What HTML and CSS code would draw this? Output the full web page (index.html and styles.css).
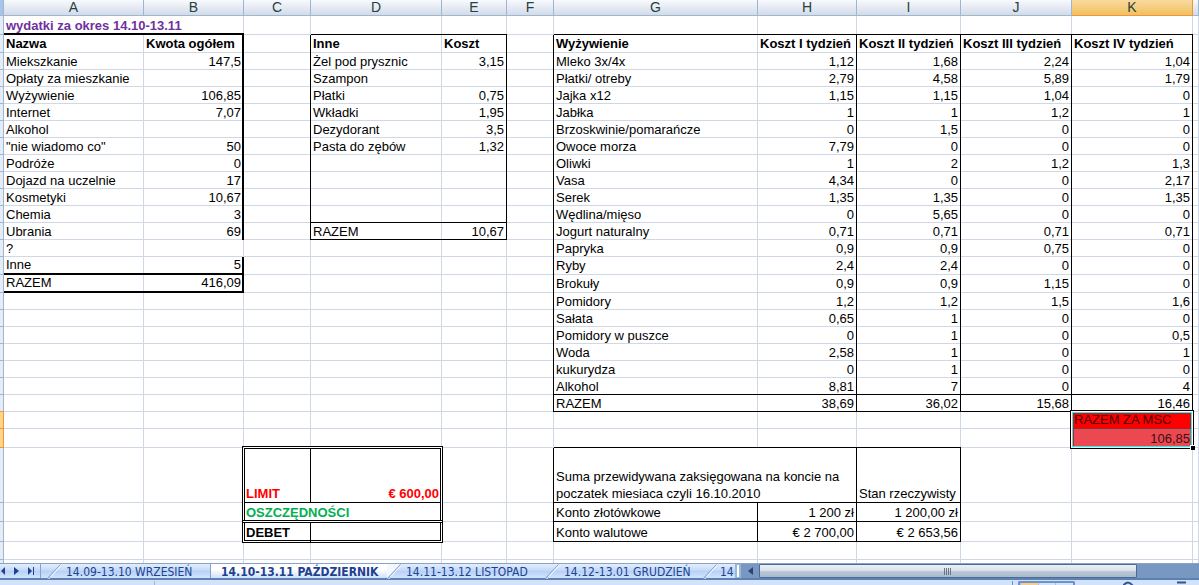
FILE: index.html
```html
<!DOCTYPE html>
<html lang="pl">
<head>
<meta charset="utf-8">
<title>Wydatki 14.10-13.11</title>
<link rel="stylesheet" href="styles.css">
</head>
<body>
<main class="sheet">
<table class="grid">
<colgroup><col class="c-head"><col class="c-a"><col class="c-b"><col class="c-c"><col class="c-d"><col class="c-e"><col class="c-f"><col class="c-g"><col class="c-h"><col class="c-i"><col class="c-j"><col class="c-k"><col></colgroup>
<thead>
<tr><th></th><th>A</th><th>B</th><th>C</th><th>D</th><th>E</th><th>F</th><th>G</th><th>H</th><th>I</th><th>J</th><th class="current">K</th><th></th></tr>
</thead>
<tbody>
<tr class="h19"><th></th><td colspan="2" class="title thick-b">wydatki za okres 14.10-13.11</td><td></td><td class="line-b"></td><td class="line-b"></td><td></td><td class="line-b"></td><td class="line-b"></td><td class="line-b"></td><td class="line-b"></td><td class="line-b"></td><td></td></tr>
<tr class="h18 exp inne food names"><th></th><td>Nazwa</td><td>Kwota ogółem</td><td></td><td>Inne</td><td>Koszt</td><td></td><td>Wyżywienie</td><td>Koszt I tydzień</td><td>Koszt II tydzień</td><td>Koszt III tydzień</td><td>Koszt IV tydzień</td><td></td></tr>
<tr class="exp inne food"><th></th><td>Miekszkanie</td><td>147,5</td><td></td><td>Żel pod prysznic</td><td>3,15</td><td></td><td>Mleko 3x/4x</td><td>1,12</td><td>1,68</td><td>2,24</td><td>1,04</td><td></td></tr>
<tr class="exp inne food"><th></th><td>Opłaty za mieszkanie</td><td></td><td></td><td>Szampon</td><td></td><td></td><td>Płatki/ otreby</td><td>2,79</td><td>4,58</td><td>5,89</td><td>1,79</td><td></td></tr>
<tr class="exp inne food"><th></th><td>Wyżywienie</td><td>106,85</td><td></td><td>Płatki</td><td>0,75</td><td></td><td>Jajka x12</td><td>1,15</td><td>1,15</td><td>1,04</td><td>0</td><td></td></tr>
<tr class="exp inne food"><th></th><td>Internet</td><td>7,07</td><td></td><td>Wkładki</td><td>1,95</td><td></td><td>Jabłka</td><td>1</td><td>1</td><td>1,2</td><td>1</td><td></td></tr>
<tr class="exp inne food"><th></th><td>Alkohol</td><td></td><td></td><td>Dezydorant</td><td>3,5</td><td></td><td>Brzoskwinie/pomarańcze</td><td>0</td><td>1,5</td><td>0</td><td>0</td><td></td></tr>
<tr class="exp inne food"><th></th><td>"nie wiadomo co"</td><td>50</td><td></td><td>Pasta do zębów</td><td>1,32</td><td></td><td>Owoce morza</td><td>7,79</td><td>0</td><td>0</td><td>0</td><td></td></tr>
<tr class="exp inne food"><th></th><td>Podróże</td><td>0</td><td></td><td></td><td></td><td></td><td>Oliwki</td><td>1</td><td>2</td><td>1,2</td><td>1,3</td><td></td></tr>
<tr class="exp inne food"><th></th><td>Dojazd na uczelnie</td><td>17</td><td></td><td></td><td></td><td></td><td>Vasa</td><td>4,34</td><td>0</td><td>0</td><td>2,17</td><td></td></tr>
<tr class="exp inne food"><th></th><td>Kosmetyki</td><td>10,67</td><td></td><td></td><td></td><td></td><td>Serek</td><td>1,35</td><td>1,35</td><td>0</td><td>1,35</td><td></td></tr>
<tr class="exp inne food"><th></th><td>Chemia</td><td>3</td><td></td><td class="line-b"></td><td class="line-b"></td><td></td><td>Wędlina/mięso</td><td>0</td><td>5,65</td><td>0</td><td>0</td><td></td></tr>
<tr class="exp inne food"><th></th><td>Ubrania</td><td>69</td><td></td><td class="line-b">RAZEM</td><td class="line-b">10,67</td><td></td><td>Jogurt naturalny</td><td>0,71</td><td>0,71</td><td>0,71</td><td>0,71</td><td></td></tr>
<tr class="food"><th></th><td>?</td><td></td><td></td><td></td><td></td><td></td><td>Papryka</td><td>0,9</td><td>0,9</td><td>0,75</td><td>0</td><td></td></tr>
<tr class="h18 exp food"><th></th><td class="thick-b">Inne</td><td class="thick-b">5</td><td></td><td></td><td></td><td></td><td>Ryby</td><td>2,4</td><td>2,4</td><td>0</td><td>0</td><td></td></tr>
<tr class="h18 exp food"><th></th><td class="thick-b">RAZEM</td><td class="thick-b">416,09</td><td></td><td></td><td></td><td></td><td>Brokuły</td><td>0,9</td><td>0,9</td><td>1,15</td><td>0</td><td></td></tr>
<tr class="food"><th></th><td></td><td></td><td></td><td></td><td></td><td></td><td>Pomidory</td><td>1,2</td><td>1,2</td><td>1,5</td><td>1,6</td><td></td></tr>
<tr class="food"><th></th><td></td><td></td><td></td><td></td><td></td><td></td><td>Sałata</td><td>0,65</td><td>1</td><td>0</td><td>0</td><td></td></tr>
<tr class="food"><th></th><td></td><td></td><td></td><td></td><td></td><td></td><td>Pomidory w puszce</td><td>0</td><td>1</td><td>0</td><td>0,5</td><td></td></tr>
<tr class="food"><th></th><td></td><td></td><td></td><td></td><td></td><td></td><td>Woda</td><td>2,58</td><td>1</td><td>0</td><td>1</td><td></td></tr>
<tr class="food"><th></th><td></td><td></td><td></td><td></td><td></td><td></td><td>kukurydza</td><td>0</td><td>1</td><td>0</td><td>0</td><td></td></tr>
<tr class="food"><th></th><td></td><td></td><td></td><td></td><td></td><td></td><td class="line-b">Alkohol</td><td class="line-b">8,81</td><td class="line-b">7</td><td class="line-b">0</td><td class="line-b">4</td><td></td></tr>
<tr class="food"><th class="before-current"></th><td></td><td></td><td></td><td></td><td></td><td></td><td class="line-b">RAZEM</td><td class="line-b">38,69</td><td class="line-b">36,02</td><td class="line-b">15,68</td><td class="line-b">16,46</td><td></td></tr>
<tr><th class="current"></th><td></td><td></td><td></td><td></td><td></td><td></td><td></td><td></td><td></td><td></td><td class="total-name">RAZEM ZA MSC</td><td></td></tr>
<tr class="h19"><th class="current"></th><td></td><td></td><td class="blank-b"></td><td class="blank-b"></td><td></td><td></td><td class="line-b"></td><td class="line-b"></td><td class="line-b"></td><td></td><td class="total-value">106,85</td><td></td></tr>
<tr class="h55"><th></th><td></td><td class="blank-r"></td><td class="limit double-box tall-box line-b line-r">LIMIT</td><td class="limit amount line-b blank-r">€ 600,00</td><td></td><td class="line-r"></td><td colspan="2" class="wrap line-b line-r">Suma przewidywana zaksięgowana na koncie na poczatek miesiaca czyli 16.10.2010</td><td class="line-b line-r">Stan rzeczywisty</td><td></td><td></td><td></td></tr>
<tr class="h19"><th></th><td></td><td class="blank-r"></td><td colspan="2" class="savings blank-b blank-r">OSZCZĘDNOŚCI</td><td></td><td class="line-r"></td><td class="line-b line-r">Konto złotówkowe</td><td class="amount line-b line-r">1 200 zł</td><td class="amount line-b line-r">1 200,00 zł</td><td></td><td></td><td></td></tr>
<tr class="h20"><th></th><td></td><td class="blank-r"></td><td class="debit double-box low-box line-r blank-b">DEBET</td><td class="blank-b blank-r"></td><td></td><td class="line-r"></td><td class="line-b line-r">Konto walutowe</td><td class="amount line-b line-r">€ 2 700,00</td><td class="amount line-b line-r">€ 2 653,56</td><td></td><td></td><td></td></tr>
<tr class="h18"><th></th><td></td><td></td><td></td><td></td><td></td><td></td><td></td><td></td><td></td><td></td><td></td><td></td></tr>
<tr><th></th><td></td><td></td><td></td><td></td><td></td><td></td><td></td><td></td><td></td><td></td><td></td><td></td></tr>
</tbody>
</table>
</main>
<nav class="tabbar" aria-label="Arkusze">
<div class="steps">
<button aria-label="Poprzedni arkusz"><svg width="5" height="8" viewBox="0 0 5 8"><path d="M5 0v8L1 4z"/></svg></button>
<button aria-label="Następny arkusz"><svg width="5" height="8" viewBox="0 0 5 8"><path d="M0 0v8l5-4z"/></svg></button>
<button aria-label="Ostatni arkusz"><svg width="7" height="8" viewBox="0 0 7 8"><path d="M0 0v8l4-4zM5 0h1v8H5z"/></svg></button>
</div>
<svg class="slant" width="14" height="16" viewBox="0 0 14 16"><path class="foot" d="M0 14.500l3-3 1 3z"/><path class="shade" d="M0 15L13.500.500"/><path class="shine" d="M1.500 15L14 1.500"/></svg>
<button class="tab first">14.09-13.10 WRZESIEŃ</button>
<button class="tab active">14.10-13.11 PAŹDZIERNIK</button>
<svg class="slant" width="14" height="16" viewBox="0 0 14 16"><path class="white" d="M0 0h13L0 15z"/><path class="foot" d="M0 14.500l3-3 1 3z"/><path class="shade" d="M0 15L13.500.500"/><path class="shine" d="M1.500 15L14 1.500"/></svg>
<button class="tab">14.11-13.12 LISTOPAD</button>
<svg class="slant" width="14" height="16" viewBox="0 0 14 16"><path class="foot" d="M0 14.500l3-3 1 3z"/><path class="shade" d="M0 15L13.500.500"/><path class="shine" d="M1.500 15L14 1.500"/></svg>
<button class="tab">14.12-13.01 GRUDZIEŃ</button>
<svg class="slant" width="14" height="16" viewBox="0 0 14 16"><path class="foot" d="M0 14.500l3-3 1 3z"/><path class="shade" d="M0 15L13.500.500"/><path class="shine" d="M1.500 15L14 1.500"/></svg>
<button class="tab last">14</button>
<div class="splitter"></div>
<div class="scroll">
<button class="scroll-left" aria-label="Przewiń w lewo"><svg width="5" height="8" viewBox="0 0 5 8"><path d="M5 0v8L0 4z"/></svg></button>
<div class="thumb"><svg width="8" height="7" viewBox="0 0 8 7"><path d="M.500 0v7M2.500 0v7M4.500 0v7M6.500 0v7"/></svg></div>
</div>
</nav>
<footer class="status">
<div class="ready"></div>
<div class="message"></div>
<div class="views"><span class="view on"></span><span class="view"></span><span class="view"></span></div>
<svg class="zoom" width="64" height="4" viewBox="0 0 64 4"><path d="M0 5Q5-2 10 5M54 1.500h9"/></svg>
</footer>
</body>
</html>
```

FILE: styles.css
```css
*, *::before, *::after { box-sizing: border-box; }

body {
  margin: 0;
  height: 100vh;
  display: flex;
  flex-direction: column;
  overflow: hidden;
  background: #fff;
  color: #000;
  font: 13px/16px "Liberation Sans", Arial, sans-serif;
}

button {
  margin: 0;
  padding: 0;
  border: 0;
  background: none;
  font: inherit;
  color: inherit;
}

svg { display: block; }

/* Worksheet */
.sheet { flex: 1; min-height: 0; overflow: hidden; }

.grid {
  width: 100%;
  table-layout: fixed;
  border-collapse: separate;
  border-spacing: 0;
}

.c-head { width: 4px; }
.c-a { width: 140px; }
.c-b { width: 100px; }
.c-c { width: 67px; }
.c-d { width: 131px; }
.c-e { width: 65px; }
.c-f { width: 47px; }
.c-g { width: 204px; }
.c-h { width: 99px; }
.c-i { width: 104px; }
.c-j { width: 111px; }
.c-k { width: 121px; }

thead th {
  height: 16px;
  padding: 0;
  border-right: 1px solid #9eb6ce;
  border-bottom: 1px solid #9eb6ce;
  background: linear-gradient(#f7fafd, #d3dbe9);
  color: #27413e;
  font-size: 14px;
  font-weight: normal;
  line-height: 15px;
}
thead th:first-child { background: #a9c4e9; }
thead th.current {
  border-color: #f29536;
  background: linear-gradient(#f9d99f, #f1c15f);
}

tbody tr { height: 17px; }
tbody .h18 { height: 18px; }
tbody .h19 { height: 19px; }
tbody .h20 { height: 20px; }
tbody .h55 { height: 55px; }

tbody th {
  padding: 0;
  border-right: 1px solid #9eb6ce;
  border-bottom: 1px solid #9eb6ce;
  background: #e4ecf7;
}
tbody th.current { border-color: #f29536; background: #ffd58d; }
tbody th.before-current { border-bottom-color: #f29536; }

/* Cell lines are painted as layers: drawn borders above the pale gridlines,
   so that the two never break each other where they cross. */
td {
  --right: transparent;
  --bottom: transparent;
  --right-size: 1px;
  --bottom-size: 1px;
  padding: 0 2px;
  border: 0 solid transparent;
  border-right-width: 1px;
  border-bottom-width: 1px;
  background-image:
    linear-gradient(var(--right), var(--right)),
    linear-gradient(var(--bottom), var(--bottom)),
    linear-gradient(#d0d7e5, #d0d7e5),
    linear-gradient(#d0d7e5, #d0d7e5);
  background-origin: border-box;
  background-position: right top, left bottom, right top, left bottom;
  background-repeat: no-repeat;
  background-size: var(--right-size) 100%, 100% var(--bottom-size), 1px 100%, 100% 1px;
  vertical-align: bottom;
  white-space: nowrap;
}

.title { color: #7030a0; font-weight: bold; }
.names td { font-weight: bold; }
.title,
.food:not(.h18) td { line-height: 14px; }

.exp:not(.names) td:nth-child(3),
.inne:not(.names) td:nth-child(6),
.food:not(.names) td:nth-child(n+9),
.amount { text-align: right; }

.exp td:nth-child(3) {
  --right: #000;
  --right-size: 2px;
  border-right-width: 2px;
  padding-right: 1px;
}
.inne td:nth-child(4),
.inne td:nth-child(6),
.food td:nth-child(7),
.food td:nth-child(n+9):nth-child(-n+12) { --right: #000; }

td.line-b { --bottom: #000; }
td.line-r { --right: #000; }
td.thick-b { --bottom: #000; --bottom-size: 2px; border-bottom-width: 2px; }
td.title { --right: #000; --right-size: 1px; background-size: 1px 2px, 100% 2px, 1px 100%, 100% 1px; background-position: right bottom, left bottom, right top, left bottom; }
td.blank-b { --bottom: #fff; }
td.blank-r { --right: #fff; }
td.wrap { white-space: normal; line-height: 17px; }

/* Limit box */
.limit { color: #f00; font-weight: bold; }
.savings { color: #00b050; font-weight: bold; }
.debit { font-weight: bold; }
.double-box { position: relative; }
.double-box::before {
  content: "";
  position: absolute;
  top: -2px;
  left: -2px;
  width: 201px;
  border: 3px double #000;
}
.tall-box::before { height: 77px; }
.low-box::before { height: 23px; }

/* Selected total */
.total-name {
  --bottom: #8b2f35;
  position: relative;
  background-color: #f00;
  color: #4a0000;
}
.total-name::before {
  content: "";
  position: absolute;
  z-index: 1;
  top: -2px;
  left: -2px;
  width: 124px;
  height: 39px;
  border: 1px solid #000;
  box-shadow: inset 0 0 0 1px #fff, inset 0 0 0 2px #0ff;
}
.total-name::after {
  content: "";
  position: absolute;
  z-index: 2;
  top: 33px;
  left: 118px;
  width: 5px;
  height: 5px;
  border: 1px solid #fff;
  border-width: 1px 0 0 1px;
  background: #000;
}
.total-value {
  background-color: #eb4851;
  box-shadow: inset 2px -1px #f00;
  color: #3c1014;
  text-align: right;
}

/* Sheet tabs */
.tabbar {
  display: flex;
  height: 17px;
  flex: none;
  border-top: 1px solid #87a3cb;
  border-bottom: 2px solid #5b82b5;
  background: linear-gradient(#e3eefb, #c4dafa 45%, #b5d0f7 50%, #d3e4fb);
  color: #1e4191;
  font: 12px/16px "DejaVu Sans Condensed", "DejaVu Sans", sans-serif;
}
.steps {
  display: flex;
  align-items: center;
  gap: 9px;
  width: 41px;
  margin-right: 6px;
  border-right: 1px solid #87a3cb;
  fill: #1e4191;
}
.slant { flex: none; fill: none; }
.foot { fill: #7f9fce; }
.white { fill: #f3f8ff; }
.shade { stroke: #7f9cc8; }
.shine { stroke: #fff; }
.tab { width: 144px; flex: none; padding-left: 5px; text-align: left; white-space: nowrap; }
.first { width: 150px; border-right: 1px solid #87a3cb; }
.active {
  width: 176px;
  padding-left: 10px;
  background: linear-gradient(#fff 40%, #cfe0f8);
  font-weight: bold;
}
.last { width: 18px; padding-left: 3px; overflow: hidden; }
.splitter {
  width: 6px;
  flex: none;
  border: 2px solid #9cb6d8;
  border-width: 1px 2px;
  background: #fff;
}
.scroll { display: flex; flex: 1; background: #7898c2; }
.scroll-left { display: grid; place-items: center; width: 18px; fill: #2c4470; }
.thumb {
  display: grid;
  place-items: center;
  flex: 1;
  margin-right: 62px;
  border: 1px solid #4f6994;
  border-radius: 1px;
  background: linear-gradient(#eef1f5, #dbe2ea 45%, #bac7d6 55%, #a9bace);
  stroke: #66748a;
}

/* Status bar */
.status {
  display: flex;
  flex: none;
  height: 5px;
  padding-top: 1px;
  background: #d2e3f9;
}
.ready { width: 155px; border-right: 1px solid #9cb9df; }
.message { flex: 1; border-right: 1px solid #6f93c6; }
.views {
  display: flex;
  width: 57px;
  margin: 0 48px 0 5px;
  border: 2px solid #6f93c6;
  border-bottom: 0;
  border-radius: 2px 2px 0 0;
}
.view { flex: 1; border-left: 1px solid #a9c3e6; }
.on { background: #f6cf93; }
.zoom { margin-right: 12px; fill: none; stroke: #35558d; stroke-width: 2; }
```
